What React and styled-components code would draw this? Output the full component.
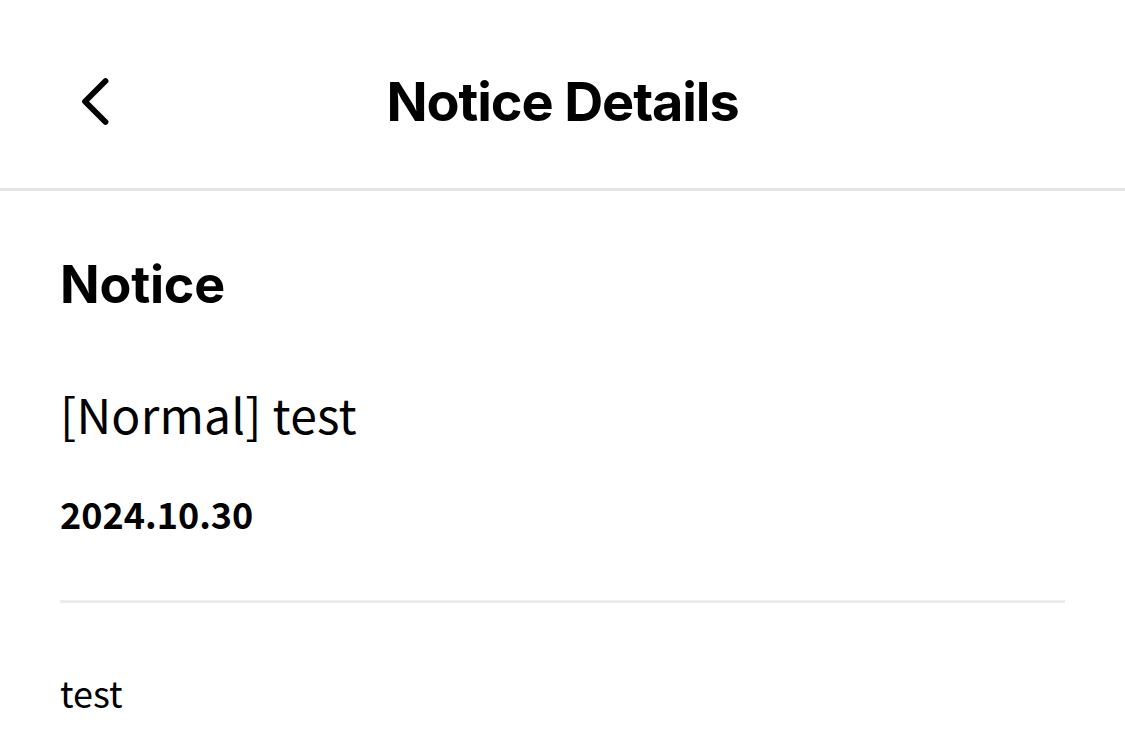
import React from "react";
import styled, { createGlobalStyle } from "styled-components";

const GlobalStyle = createGlobalStyle`
  html, body {
    margin: 0;
    padding: 0;
    background: #fff;
  }
  body {
    font-family: "Noto Sans CJK KR", "Noto Sans", sans-serif;
    color: #000;
  }
`;

const notice = {
  category: "Normal",
  title: "test",
  date: "2024.10.30",
  body: "test",
};

const App = () => {
  return (
    <PAGE>
      <GlobalStyle />
      <HEADER>
        <BackBtn aria-label="back">
          <svg width="60" height="60" viewBox="0 0 60 60" fill="none">
            <path
              d="M45.5 9 L25 29.5 L45.5 50"
              stroke="#000"
              strokeWidth="5.8"
              strokeLinecap="round"
              strokeLinejoin="round"
            />
          </svg>
        </BackBtn>
        <TITLE>Notice Details</TITLE>
        <div />
      </HEADER>
      <CONTENT>
        <HEADING>Notice</HEADING>
        <SUBJECT>
          [{notice.category}] {notice.title}
        </SUBJECT>
        <DATE>{notice.date}</DATE>
        <DIVIDER />
        <BODY>{notice.body}</BODY>
      </CONTENT>
    </PAGE>
  );
};

const PAGE = styled.div`
  width: 1125px;
  min-height: 743px;
  background: #fff;
`;

const HEADER = styled.header`
  display: grid;
  grid-template-columns: 1fr auto 1fr;
  align-items: center;
  height: 172px;
  padding: 16px 60px 0;
  border-bottom: 3px solid #e5e5e5;
`;

const BackBtn = styled.button`
  display: flex;
  align-items: center;
  width: 60px;
  height: 60px;
  padding: 0;
  border: none;
  background: none;
  cursor: pointer;
`;

const TITLE = styled.h1`
  margin: 0;
  font-family: Inter, "Noto Sans", sans-serif;
  font-weight: 700;
  font-size: 54px;
  line-height: 1.2;
  letter-spacing: -1.1px;
`;

const CONTENT = styled.main`
  padding: 0 60px;
  display: flex;
  flex-direction: column;
`;

const HEADING = styled.h2`
  margin: 63px 0 0;
  font-family: Inter, "Noto Sans", sans-serif;
  font-weight: 700;
  font-size: 52px;
  line-height: 62px;
  letter-spacing: -0.2px;
`;

const SUBJECT = styled.p`
  margin: 61px 0 0;
  font-size: 48px;
  font-weight: 400;
  line-height: 72px;
  letter-spacing: 0.2px;
`;

const DATE = styled.p`
  margin: 37px 0 0;
  font-size: 36px;
  font-weight: 700;
  line-height: 54px;
`;

const DIVIDER = styled.hr`
  margin: 60px 0 0;
  height: 3px;
  border: none;
  background: #ebebef;
`;

const BODY = styled.p`
  margin: 62px 0 0;
  font-size: 36px;
  line-height: 54px;
`;

export default App;
